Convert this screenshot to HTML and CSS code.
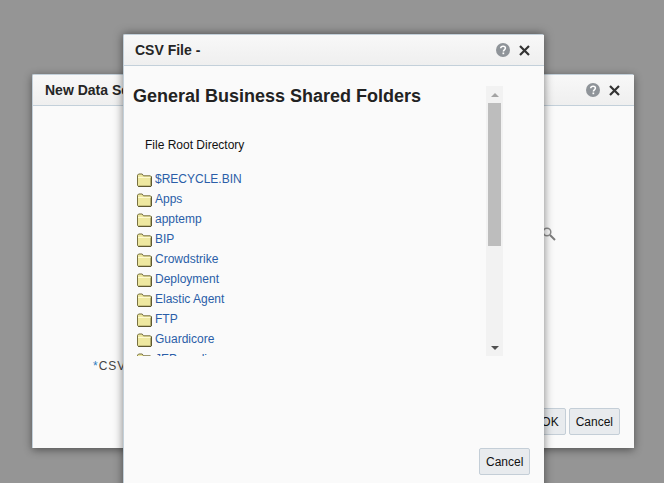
FILE: index.html
```html
<!DOCTYPE html>
<html lang="en">
<head>
<meta charset="utf-8">
<title>CSV File</title>
<link rel="stylesheet" href="styles.css">
</head>
<body>
<svg class="defs" width="0" height="0" aria-hidden="true">
  <symbol id="folder" viewBox="0 0 15 14">
    <path d="M.5 12.5V2.2L1.600 1h3.600l1.300 1.800h6.900l.6.7v9l-.6.7H1.100z" fill="#eee8a0" stroke="#77703f"/>
    <path d="M1 4.500h12.600" stroke="#fdf9cf" fill="none"/>
    <path d="M1.200 13.500h13M14.500 3.500v9.500" stroke="#5f5930" fill="none"/>
  </symbol>
  <symbol id="help" viewBox="0 0 14 14">
    <circle cx="7" cy="7" r="7" fill="#8f9499"/>
    <path d="M4.700 5.300C4.800 3.900 5.700 3.200 7.100 3.200c1.400 0 2.300.8 2.300 1.900 0 1.800-2 1.700-2 3.400" fill="none" stroke="#fff" stroke-width="1.500"/>
    <rect x="6.500" y="9.500" width="1.700" height="1.700" fill="#fff"/>
  </symbol>
  <symbol id="close" viewBox="0 0 11 11">
    <path d="M1 1l9 9M10 1l-9 9" fill="none" stroke="#333" stroke-width="2.200"/>
  </symbol>
</svg>

<section class="dialog back">
  <header class="dialog-head">
    <h2 class="dialog-title">New Data Set</h2>
    <div class="head-icons">
      <svg class="icon-help"><use href="#help"/></svg>
      <svg class="icon-close"><use href="#close"/></svg>
    </div>
  </header>
  <div class="back-body">
    <svg class="search" viewBox="0 0 14 14" aria-hidden="true">
      <circle cx="5" cy="5" r="3.800" fill="none" stroke="#8c8c8c" stroke-width="1.500"/>
      <path d="M8 8l5 5" stroke="#7d7d7d" stroke-width="2"/>
    </svg>
    <div class="csv-label"><span class="req">*</span>CSV File</div>
    <div class="actions back-actions">
      <button class="btn" type="button">OK</button>
      <button class="btn" type="button">Cancel</button>
    </div>
  </div>
</section>

<section class="dialog front">
  <header class="dialog-head">
    <h2 class="dialog-title">CSV File -</h2>
    <div class="head-icons">
      <svg class="icon-help"><use href="#help"/></svg>
      <svg class="icon-close"><use href="#close"/></svg>
    </div>
  </header>
  <div class="front-body">
    <div class="browser">
      <div class="browser-view">
        <h1 class="browser-heading">General Business Shared Folders</h1>
        <p class="root">File Root Directory</p>
        <ul class="folders">
          <li class="folder"><svg class="folder-icon"><use href="#folder"/></svg><a href="#">$RECYCLE.BIN</a></li>
          <li class="folder"><svg class="folder-icon"><use href="#folder"/></svg><a href="#">Apps</a></li>
          <li class="folder"><svg class="folder-icon"><use href="#folder"/></svg><a href="#">apptemp</a></li>
          <li class="folder"><svg class="folder-icon"><use href="#folder"/></svg><a href="#">BIP</a></li>
          <li class="folder"><svg class="folder-icon"><use href="#folder"/></svg><a href="#">Crowdstrike</a></li>
          <li class="folder"><svg class="folder-icon"><use href="#folder"/></svg><a href="#">Deployment</a></li>
          <li class="folder"><svg class="folder-icon"><use href="#folder"/></svg><a href="#">Elastic Agent</a></li>
          <li class="folder"><svg class="folder-icon"><use href="#folder"/></svg><a href="#">FTP</a></li>
          <li class="folder"><svg class="folder-icon"><use href="#folder"/></svg><a href="#">Guardicore</a></li>
          <li class="folder"><svg class="folder-icon"><use href="#folder"/></svg><a href="#">JEP-media</a></li>
        </ul>
      </div>
      <div class="scrollbar">
        <div class="arrow arrow-up"></div>
        <div class="track"><div class="thumb"></div></div>
        <div class="arrow arrow-down"></div>
      </div>
    </div>
    <div class="actions front-actions">
      <button class="btn" type="button">Cancel</button>
    </div>
  </div>
</section>
</body>
</html>
```
FILE: styles.css
```css
html, body {
  margin: 0;
  height: 100%;
  overflow: hidden;
}
body {
  position: relative;
  background: #959595;
  font-family: "Liberation Sans", Arial, sans-serif;
  font-size: 12px;
  color: #1f1f1f;
}
.defs { position: absolute; }

.dialog {
  position: absolute;
  box-sizing: border-box;
  display: flex;
  flex-direction: column;
  background: #fafafa;
  border-radius: 2px 2px 0 0;
  border-top: 1px solid #c3d0da;
  border-left: 1px solid #c3d0da;
  box-shadow: 0 2px 8px rgba(0, 0, 0, .45);
}
.back {
  left: 32px;
  top: 74px;
  width: 602px;
  height: 374px;
}
.front {
  left: 123px;
  top: 34px;
  width: 421px;
  height: 470px;
  box-shadow: 0 0 10px rgba(0, 0, 0, .5);
}
.dialog-head {
  flex: none;
  box-sizing: border-box;
  height: 31px;
  display: flex;
  align-items: center;
  justify-content: space-between;
  padding: 0 14px 0 12px;
  background: linear-gradient(#f8f8f8, #efefef);
  border-bottom: 1px solid #c3d0da;
}
.front .dialog-head { padding-left: 11px; }
.dialog-title {
  margin: 0;
  font-size: 14px;
  font-weight: bold;
  color: #252525;
}
.head-icons {
  display: flex;
  align-items: center;
  gap: 9px;
}
.icon-help { width: 14px; height: 14px; display: block; }
.icon-close { width: 11px; height: 11px; display: block; }

.back-body, .front-body {
  flex: 1;
  position: relative;
}
.search {
  position: absolute;
  left: 509px;
  top: 121px;
  width: 14px;
  height: 14px;
}
.csv-label {
  position: absolute;
  left: 60px;
  top: 253px;
  color: #444;
  letter-spacing: 1px;
}
.req { color: #2f7cc0; }

.actions { display: flex; gap: 3px; }
.back-actions {
  position: absolute;
  right: 14px;
  top: 302px;
}
.front-actions {
  position: absolute;
  left: 355px;
  top: 382px;
}
.btn {
  box-sizing: border-box;
  height: 27px;
  padding: 0 6px;
  border: 1px solid #c4ced7;
  border-radius: 2px;
  background: #e8ebee;
  font-family: inherit;
  font-size: 12px;
  color: #111;
}

.browser {
  position: absolute;
  left: 9px;
  top: 20px;
  display: flex;
  height: 270px;
}
.browser-view {
  width: 353px;
  height: 270px;
  overflow: hidden;
}
.browser-heading {
  margin: 0;
  font-size: 18px;
  line-height: 21px;
  font-weight: bold;
  color: #222;
}
.root {
  margin: 31px 0 0 12px;
  line-height: 14px;
  color: #111;
}
.folders {
  list-style: none;
  margin: 17px 0 0;
  padding: 0 0 0 4px;
}
.folder {
  display: flex;
  align-items: center;
  height: 20px;
}
.folder-icon {
  width: 15px;
  height: 14px;
  margin: 2px 3px 0 0;
  flex: none;
}
.folder a {
  color: #2a5ea8;
  text-decoration: none;
}

.scrollbar {
  width: 17px;
  height: 270px;
  background: #f2f2f2;
  display: flex;
  flex-direction: column;
}
.arrow {
  flex: none;
  height: 17px;
  display: flex;
  align-items: center;
  justify-content: center;
}
.arrow::before {
  content: "";
  border-left: 4px solid transparent;
  border-right: 4px solid transparent;
}
.arrow-up::before { border-bottom: 4px solid #a3a3a3; }
.arrow-down::before { border-top: 4px solid #505050; }
.track {
  flex: 1;
  padding: 0 2px;
}
.thumb {
  height: 143px;
  background: #bdbdbd;
}
```
